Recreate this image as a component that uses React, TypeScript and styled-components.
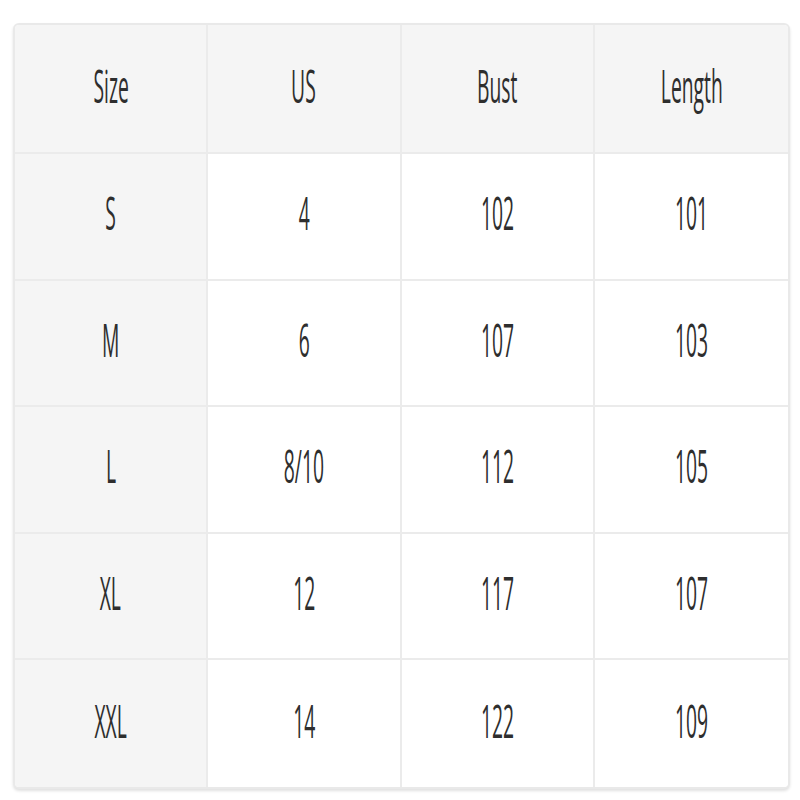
import React from "react";
import styled, { createGlobalStyle } from "styled-components";

const Global = createGlobalStyle`
  html, body { margin: 0; padding: 0; background: #ffffff; }
  body { font-family: "Open Sans", "Liberation Sans", sans-serif; }
`;

const Page = styled.div`
  width: 800px;
  height: 800px;
  padding: 23px 10px 0 13px;
  box-sizing: border-box;
  background: #fff;
`;

const Table = styled.div`
  display: grid;
  grid-template-columns: repeat(4, 1fr);
  grid-template-rows: 129px repeat(5, 126.6px);
  width: 777px;
  border: 2px solid #e9e9e9;
  border-radius: 6px;
  box-sizing: border-box;
  overflow: hidden;
  box-shadow: 0 2px 3px rgba(0, 0, 0, 0.12);
  background: #fff;
`;

const Cell = styled.div<{ $shade: boolean; $lastCol: boolean; $lastRow: boolean }>`
  display: flex;
  align-items: center;
  justify-content: center;
  background: ${(p) => (p.$shade ? "#f5f5f5" : "#ffffff")};
  border-right: ${(p) => (p.$lastCol ? "none" : "2px solid #ebebeb")};
  border-bottom: ${(p) => (p.$lastRow ? "none" : "2px solid #ebebeb")};
`;

const Label = styled.span`
  display: inline-block;
  font-family: "Open Sans", "Liberation Sans", sans-serif;
  font-size: 46px;
  color: #2e2e2e;
  line-height: 1;
  transform: translateY(-4px) scaleX(0.42);
  white-space: nowrap;
`;

const header = ["Size", "US", "Bust", "Length"];
const rows = [
  ["S", "4", "102", "101"],
  ["M", "6", "107", "103"],
  ["L", "8/10", "112", "105"],
  ["XL", "12", "117", "107"],
  ["XXL", "14", "122", "109"],
];

export default function App() {
  const all = [header, ...rows];
  return (
    <>
      <Global />
      <Page>
        <Table>
          {all.map((r, ri) =>
            r.map((c, ci) => (
              <Cell
                key={`${ri}-${ci}`}
                $shade={ri === 0 || ci === 0}
                $lastCol={ci === 3}
                $lastRow={ri === all.length - 1}
              >
                <Label>{c}</Label>
              </Cell>
            ))
          )}
        </Table>
      </Page>
    </>
  );
}
